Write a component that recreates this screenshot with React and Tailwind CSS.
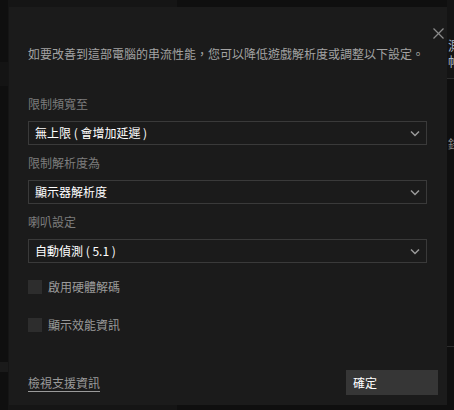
import React from 'react';

const Chevron = () => (
  <svg width="10" height="7" viewBox="0 0 10 7" fill="none">
    <polyline points="1,1.5 5,5.5 9,1.5" stroke="#9a9a9a" strokeWidth="1.5" />
  </svg>
);

const SelectBox = ({ value }) => (
  <div className="flex items-center justify-between h-[24px] border border-[#3a3a3a] pl-[6px] pr-[6px]">
    <span className="text-[12px] text-white leading-none whitespace-pre">{value}</span>
    <Chevron />
  </div>
);

const Field = ({ label, value, top }) => (
  <div className={top}>
    <div className="text-[12px] leading-[18px] text-[#7d7d7d]">{label}</div>
    <div className="mt-[8px]">
      <SelectBox value={value} />
    </div>
  </div>
);

const CheckRow = ({ label, top }) => (
  <div className={`flex items-center gap-[6px] h-[18px] ${top}`}>
    <div className="w-[14px] h-[14px] bg-[#2d2d2d]" />
    <span className="text-[12px] text-[#9a9a9a]">{label}</span>
  </div>
);

export default function App() {
  return (
    <div className="relative w-[454px] h-[410px] overflow-hidden bg-[#0f0f0f] font-['Noto_Sans_CJK_TC',sans-serif]">
      {/* page behind the dialog */}
      <div className="flex h-full">
        <div className="w-[8px] flex flex-col">
          <div className="h-[62px]" />
          <div className="h-[24px] bg-[#141414]" />
          <div className="h-[276px]" />
          <div className="h-[10px] bg-[#1a1a1a]" />
        </div>
        <div className="w-[169px] bg-[#151515]" />
        <div className="flex-1" />
        <div className="w-[7px] flex flex-col overflow-hidden">
          <div className="h-[78px] bg-[#141414] pt-[37px] pl-[1px] text-[13px] leading-[16px] text-[#a8b4c8] whitespace-nowrap">
            <div>測</div>
            <div>帕</div>
          </div>
          <div className="h-[1px] bg-[#2c2c2c]" />
          <div className="pt-[58px] pl-[1px] text-[12px] leading-[14px] text-[#8a8a8a] whitespace-nowrap">錄</div>
          <div className="mt-[195px] h-[1px] bg-[#2c2c2c]" />
        </div>
      </div>

      {/* dialog */}
      <div className="absolute left-[9px] top-[7px] w-[438px] h-[398px] bg-[#1b1b1b]">
        <button className="absolute right-[3px] top-[21px] w-[11px] h-[11px]">
          <svg width="11" height="11" viewBox="0 0 11 11" fill="none">
            <line x1="0.5" y1="0.5" x2="10.5" y2="10.5" stroke="#8a8a8a" strokeWidth="1.2" />
            <line x1="10.5" y1="0.5" x2="0.5" y2="10.5" stroke="#8a8a8a" strokeWidth="1.2" />
          </svg>
        </button>

        <div className="flex flex-col pt-[38px] pl-[19px] pr-[20px]">
          <p className="text-[12px] leading-[18px] text-[#a3a3a3] whitespace-nowrap">
            如要改善到這部電腦的串流性能，您可以降低遊戲解析度或調整以下設定。
          </p>

          <Field top="mt-[32px]" label="限制頻寬至" value="無上限 ( 會增加延遲 )" />
          <Field top="mt-[9px]" label="限制解析度為" value="顯示器解析度" />
          <Field top="mt-[9px]" label="喇叭設定" value="自動偵測 ( 5.1 )" />

          <CheckRow top="mt-[15px]" label="啟用硬體解碼" />
          <CheckRow top="mt-[20px]" label="顯示效能資訊" />

          <div className="flex items-center justify-between mt-[36px] mr-[-11px]">
            <a className="text-[12px] text-[#9a9a9a] underline underline-offset-[3px]">檢視支援資訊</a>
            <button className="w-[92px] h-[25px] bg-[#363636] text-left pl-[7px] text-[12px] text-white">
              確定
            </button>
          </div>
        </div>
      </div>
    </div>
  );
}
